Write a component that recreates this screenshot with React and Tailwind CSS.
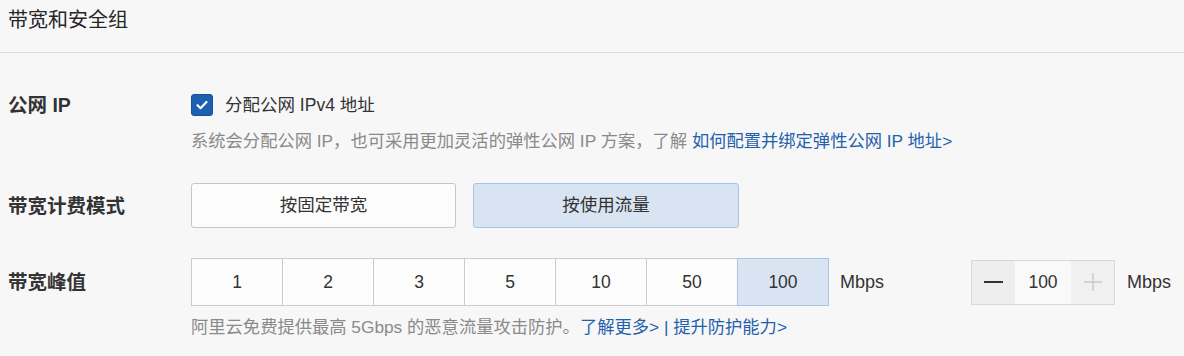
import React from "react";

const peaks = ["1", "2", "3", "5", "10", "50", "100"];

const Label = ({ children }) => (
  <div className="w-[183px] shrink-0 text-[19.5px] leading-[24px] font-bold text-[#333]">{children}</div>
);

export default function App() {
  return (
    <div
      className="h-[356px] w-full bg-[#f7f7f7] text-[#333]"
      style={{ fontFamily: '"Liberation Sans", "Noto Sans CJK SC", sans-serif' }}
    >
      <div className="h-[53px] border-b border-[#dcdcdc] px-2 pt-[8px]">
        <h2 className="text-[20px] leading-[24px] text-[#262626]">带宽和安全组</h2>
      </div>

      <div className="px-2">
        {/* public ip */}
        <div className="mt-[40px] flex items-center">
          <Label>公网 IP</Label>
          <div className="flex h-[24px] items-center">
            <span className="flex h-[22px] w-[22px] items-center justify-center rounded-[3px] border border-[#174f96] bg-[#1d60b2]">
              <svg width="14" height="14" viewBox="0 0 14 14" fill="none">
                <path d="M2.5 7.2l3 3 6-6.2" stroke="#fff" strokeWidth="2.2" strokeLinecap="round" strokeLinejoin="round" />
              </svg>
            </span>
            <span className="ml-[12px] text-[17.5px] text-[#333]">分配公网 IPv4 地址</span>
          </div>
        </div>
        <p className="mt-[12px] ml-[183px] text-[17.3px] leading-[24px] text-[#8a8a8a]">
          系统会分配公网 IP，也可采用更加灵活的弹性公网 IP 方案，了解{" "}
          <a className="text-[#1f61ad]">如何配置并绑定弹性公网 IP 地址&gt;</a>
        </p>

        {/* billing */}
        <div className="mt-[30px] flex items-center">
          <Label>带宽计费模式</Label>
          <div className="flex gap-[17px]">
            <button className="h-[45px] w-[265px] rounded-[3px] border border-[#c6c6c6] bg-[#fcfcfc] text-[17.5px] text-[#333]">
              按固定带宽
            </button>
            <button className="h-[45px] w-[266px] rounded-[3px] border border-[#a9c4e3] bg-[#d8e4f2] text-[17.5px] text-[#333]">
              按使用流量
            </button>
          </div>
        </div>

        {/* peak */}
        <div className="mt-[30px] flex items-center">
          <Label>带宽峰值</Label>
          <div className="flex">
            {peaks.map((p) => (
              <button
                key={p}
                className={
                  p === "100"
                    ? "relative z-10 -ml-px h-[48px] w-[92px] border border-[#a9c4e3] bg-[#d8e4f2] text-[17.5px] text-[#333]"
                    : "-ml-px h-[48px] w-[92px] border border-[#cccccc] bg-[#fcfcfc] text-[17.5px] text-[#333] first:ml-0"
                }
              >
                {p}
              </button>
            ))}
          </div>
          <span className="ml-[11px] text-[18px]">Mbps</span>
          <div className="ml-[87px] flex h-[45px] border border-[#d8d8d8]">
            <button className="flex w-[43px] items-center justify-center bg-[#eeeeee]">
              <span className="block h-[2px] w-[19px] bg-[#333]" />
            </button>
            <div className="flex w-[56px] items-center justify-center bg-[#f9f9f9] text-[17.5px]">100</div>
            <button className="flex w-[43px] items-center justify-center bg-[#f0f0f0]">
              <svg width="20" height="20" viewBox="0 0 20 20">
                <path d="M10 1v18M1 10h18" stroke="#c8c8c8" strokeWidth="1.4" />
              </svg>
            </button>
          </div>
          <span className="ml-[12px] text-[18px]">Mbps</span>
        </div>
        <p className="mt-[9px] ml-[183px] text-[17.3px] leading-[24px] text-[#8a8a8a]">
          阿里云免费提供最高 5Gbps 的恶意流量攻击防护。
          <a className="text-[#1f61ad]">了解更多&gt;</a>
          <span className="text-[#1f61ad]"> | </span>
          <a className="text-[#1f61ad]">提升防护能力&gt;</a>
        </p>
      </div>
    </div>
  );
}
